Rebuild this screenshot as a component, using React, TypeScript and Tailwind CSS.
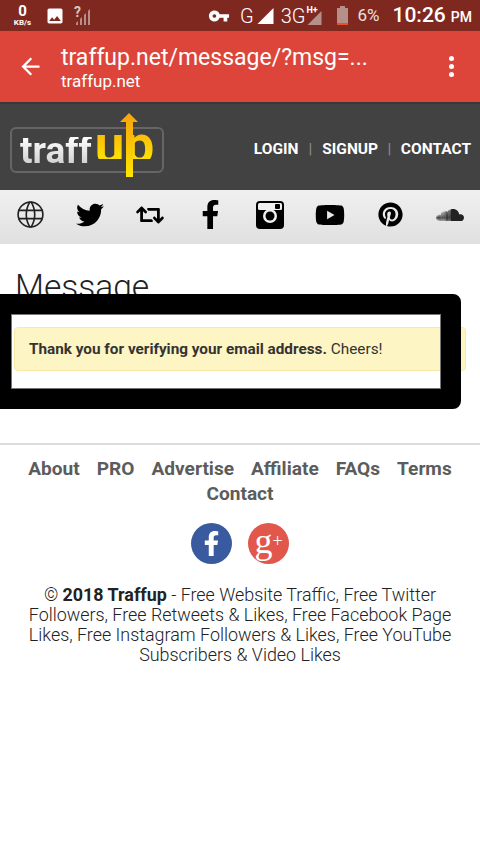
import { FaFacebookF, FaPinterest, FaRetweet, FaSoundcloud, FaTwitter, FaYoutube } from "react-icons/fa";
import { TbWorld } from "react-icons/tb";
import { MdArrowBack, MdImage, MdVpnKey } from "react-icons/md";

const footerLinks = ["About", "PRO", "Advertise", "Affiliate", "FAQs", "Terms", "Contact"];

function Signal({ fill = "#fff", className = "" }: { fill?: string; className?: string }) {
  return (
    <svg viewBox="0 0 16 16" className={className}>
      <path d="M16 0v16H0z" fill={fill} />
    </svg>
  );
}

function BarSignal({ className = "" }: { className?: string }) {
  return (
    <svg viewBox="0 0 16 16" className={className}>
      <path d="M1 16v-2l2-2v4zM5 16v-6l2-2v8zM9 16V6l2-2v12zM13 16V2l2-2v16z" fill="#b58f8a" />
    </svg>
  );
}

function StatusBar() {
  return (
    <div className="flex h-[31px] items-center bg-[#7f2820] text-white">
      <div className="ml-[11px] flex w-[23px] flex-col items-center leading-none">
        <span className="text-[15px] font-bold leading-[13px]">0</span>
        <span className="text-[8px] font-bold leading-[9px]">KB/s</span>
      </div>
      <MdImage className="ml-[11px] text-[20px]" />
      <div className="relative ml-[9px] h-[20px] w-[17px]">
        <span className="absolute left-0 top-[-4px] text-[14px] font-bold text-[#d9c4c0]">?</span>
        <BarSignal className="absolute bottom-[1px] right-0 h-[16px] w-[16px]" />
      </div>
      <MdVpnKey className="ml-[117px] text-[22px]" />
      <span className="ml-[10px] text-[20px] font-light leading-none">G</span>
      <Signal className="ml-[3px] h-[16px] w-[17px]" />
      <span className="ml-[7px] text-[20px] font-light leading-none">3G</span>
      <div className="relative h-[20px] w-[18px]">
        <span className="absolute left-[1px] top-[-2px] text-[9px] font-bold leading-[12px]">H+</span>
        <Signal fill="#b58f8a" className="absolute bottom-[1px] right-0 h-[14px] w-[17px]" />
      </div>
      <div className="ml-[14px] flex h-[19px] w-[11px] flex-col items-center">
        <div className="h-[2px] w-[5px] bg-[#b58f8a]" />
        <div className="flex h-[17px] w-[11px] flex-col justify-end bg-[#b58f8a]">
          <div className="h-[2px] bg-[#e8502f]" />
        </div>
      </div>
      <span className="ml-[9px] text-[17px] leading-none text-[#ece0de]">6%</span>
      <span className="ml-[13px] text-[21px] font-medium leading-none">10:26</span>
      <span className="ml-[5px] mt-[3px] text-[14px] font-medium leading-none">PM</span>
    </div>
  );
}

function Toolbar() {
  return (
    <div className="flex h-[71px] items-center bg-[#dd453a] text-white">
      <MdArrowBack className="ml-[17px] text-[27px]" />
      <div className="ml-[17px] flex-1 pt-[2px]">
        <div className="text-[23px] leading-[27px]">traffup.net/message/?msg=...</div>
        <div className="text-[17px] leading-[21px]">traffup.net</div>
      </div>
      <div className="mr-[26px] flex flex-col gap-[3px]">
        <span className="size-[5px] rounded-full bg-white" />
        <span className="size-[5px] rounded-full bg-white" />
        <span className="size-[5px] rounded-full bg-white" />
      </div>
    </div>
  );
}

function Logo() {
  return (
    <div className="relative ml-[10px] flex h-[46px] w-[154px] items-baseline rounded-[6px] border-2 border-[#666666] pl-[8px] pt-[2px] font-bold leading-[28px]">
      <span className="bg-gradient-to-b from-white to-[#cfcfcf] bg-clip-text text-[37px] text-transparent">traff</span>
      <span className="ml-[3px] bg-gradient-to-b from-[#f8b80a] to-[#ffe000] bg-clip-text text-[53px] text-transparent">up</span>
      <svg viewBox="0 0 18 64" className="absolute left-[108px] top-[-16px] h-[64px] w-[18px]">
        <defs>
          <linearGradient id="arrow" x1="0" y1="0" x2="0" y2="1">
            <stop offset="0" stopColor="#f7a30c" />
            <stop offset="1" stopColor="#ffe600" />
          </linearGradient>
        </defs>
        <path d="M9 0l9 9h-5v55H6V9H0z" fill="url(#arrow)" />
      </svg>
    </div>
  );
}

function SiteHeader() {
  return (
    <div className="flex h-[88px] items-center justify-between border-t-2 border-[#383838] bg-[#424242] pt-[5px]">
      <Logo />
      <div className="mr-[9px] flex items-center text-[15.5px] font-bold text-white">
        <span>LOGIN</span>
        <span className="mx-[10px] font-normal text-[#8c8c8c]">|</span>
        <span>SIGNUP</span>
        <span className="mx-[9.5px] font-normal text-[#8c8c8c]">|</span>
        <span>CONTACT</span>
      </div>
    </div>
  );
}

function InstagramIcon() {
  return (
    <svg viewBox="0 0 28 28" className="size-[28px]">
      <rect width="28" height="28" rx="4" fill="#000" />
      <rect x="2" y="2" width="24" height="7" rx="1.5" fill="#f0f0f0" />
      <rect x="19" y="3" width="5" height="5" rx="1" fill="#000" />
      <circle cx="14" cy="15" r="7" fill="#f0f0f0" />
      <circle cx="14" cy="15" r="4.5" fill="#000" />
    </svg>
  );
}

function SocialBar() {
  const cell = "flex w-[60px] items-center justify-center text-black";
  return (
    <div className="flex h-[54px] items-center bg-gradient-to-b from-[#f0f0f0] to-[#e0e0e0] pb-[5px]">
      <div className={cell}><TbWorld className="text-[33px] stroke-[1.2] text-[#222222]" /></div>
      <div className={cell}><FaTwitter className="text-[28px]" /></div>
      <div className={cell}><FaRetweet className="text-[28px]" /></div>
      <div className={cell}><FaFacebookF className="text-[29px]" /></div>
      <div className={cell}><InstagramIcon /></div>
      <div className={cell}><FaYoutube className="text-[30px]" /></div>
      <div className={cell}><FaPinterest className="text-[25px]" /></div>
      <div className={cell}><FaSoundcloud className="text-[28px] text-[#222222]" /></div>
    </div>
  );
}

function Message() {
  return (
    <div className="relative h-[201px] border-b-2 border-[#dddddd]">
      <h1 className="pl-[15px] pt-[24px] text-[33.5px] font-light leading-[38px] text-[#222222]">Message</h1>
      <div className="mx-[14px] mt-[21px] flex h-[44px] items-center rounded-[4px] border border-[#f7eaa8] bg-[#fef5c4] pl-[14px] text-[15.3px] text-[#333333]">
        <b className="font-bold">Thank you for verifying your email address.</b>
        <span className="ml-[4px]">Cheers!</span>
      </div>
      {/* black scribble frame drawn over the page */}
      <div className="absolute left-[-9px] top-[50px] h-[115px] w-[470px] rounded-[8px] border-[20px] border-black">
        <div className="h-full border border-[#777777]" />
      </div>
    </div>
  );
}

function Footer() {
  return (
    <div className="px-[20px] pt-[11px] text-center">
      <div className="flex flex-wrap justify-center gap-x-[17px] text-[19.1px] font-bold leading-[25px] text-[#5c5c5c]">
        {footerLinks.map((link) => (
          <span key={link}>{link}</span>
        ))}
      </div>
      <div className="mt-[17px] flex justify-center gap-[16px]">
        <div className="flex size-[41px] items-center justify-center rounded-full bg-[#3a5a9f] text-white">
          <FaFacebookF className="text-[25px]" />
        </div>
        <div
          className="flex size-[41px] items-center justify-center rounded-full bg-[#e2574c] pb-[6px] text-[36px] leading-none text-white"
          style={{ fontFamily: '"Liberation Serif", serif' }}
        >
          g<span className="text-[18px]">+</span>
        </div>
      </div>
      <p className="mt-[21px] text-[17.9px] font-light leading-[20.1px] text-[#222222]">
        © <b className="font-bold">2018 Traffup</b> - Free Website Traffic, Free Twitter Followers, Free Retweets &amp; Likes, Free Facebook Page Likes, Free Instagram Followers &amp; Likes, Free YouTube Subscribers &amp; Video Likes
      </p>
    </div>
  );
}

export default function App() {
  return (
    <div
      className="h-[854px] w-[480px] overflow-hidden bg-white"
      style={{ fontFamily: 'Roboto, "Liberation Sans", sans-serif' }}
    >
      <StatusBar />
      <Toolbar />
      <SiteHeader />
      <SocialBar />
      <Message />
      <Footer />
    </div>
  );
}
